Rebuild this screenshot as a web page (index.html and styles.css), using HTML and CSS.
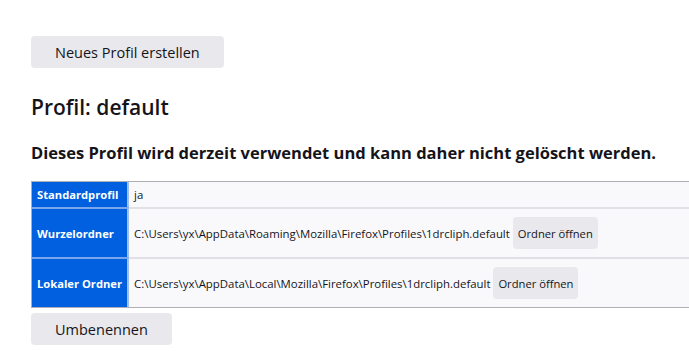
FILE: index.html
```html
<!DOCTYPE html>
<html lang="de">
<head>
  <meta charset="UTF-8" />
  <title>Über Profile</title>
  <link rel="stylesheet" href="styles.css">
</head>
<body>
  <main class="page">
    <button class="btn btn-main">Neues Profil erstellen</button>
    <h2 class="profile-title">Profil: default</h2>
    <p class="notice">Dieses Profil wird derzeit verwendet und kann daher nicht gelöscht werden.</p>
    <table class="profile-table">
      <tr class="row-small">
        <th>Standardprofil</th>
        <td>ja</td>
      </tr>
      <tr>
        <th>Wurzelordner</th>
        <td>C:\Users\yx\AppData\Roaming\Mozilla\Firefox\Profiles\1drcliph.default <button class="btn btn-small">Ordner öffnen</button></td>
      </tr>
      <tr>
        <th>Lokaler Ordner</th>
        <td>C:\Users\yx\AppData\Local\Mozilla\Firefox\Profiles\1drcliph.default <button class="btn btn-small">Ordner öffnen</button></td>
      </tr>
    </table>
    <button class="btn btn-main btn-rename">Umbenennen</button>
  </main>
</body>
</html>
```

FILE: styles.css
```css
* { box-sizing: border-box; }
html, body { overflow: hidden; }
body {
  margin: 0; padding: 0;
  background: #fff; color: #15141a;
  font-family: "Open Sans", "Noto Sans", sans-serif;
}

.page { padding: 36px 0 0 31px; }

.btn {
  background: #e9e9ed; color: #15141a;
  border: none; border-radius: 4px;
  font-family: inherit; cursor: pointer;
}
.btn-main {
  display: block; height: 32px;
  padding: 0 24px; font-size: 14.5px;
}
.btn-rename { margin-top: 5px; }
.btn-small {
  height: 32px; padding: 0 5px;
  font-size: 11.2px; margin-left: 0;
}

.profile-title {
  font-size: 21px; font-weight: 600;
  margin: 26px 0 0; line-height: 27px;
}

.notice {
  font-size: 16.5px; font-weight: 700;
  margin: 21px 0 0; line-height: 22px;
}

.profile-table {
  margin-top: 17px; width: 720px;
  border: 1px solid #aeaeb6; border-spacing: 0;
  font-size: 11.4px;
}
.profile-table th, .profile-table td {
  height: 50px; padding: 0 5px;
  border-top: 2px solid #e0e0e6;
}
.profile-table tr:first-child th, .profile-table tr:first-child td { border-top: none; }
.profile-table th {
  background: #0060df; color: #fff;
  text-align: left; width: 95px;
  font-size: 11.2px; font-weight: 700;
  white-space: nowrap;
  border-right: 2px solid #9fc0ef;
  border-top-color: #7aa6ec;
}
.profile-table td { background: #f9f9fb; }
.profile-table .row-small th, .profile-table .row-small td { height: 25px; }
```
